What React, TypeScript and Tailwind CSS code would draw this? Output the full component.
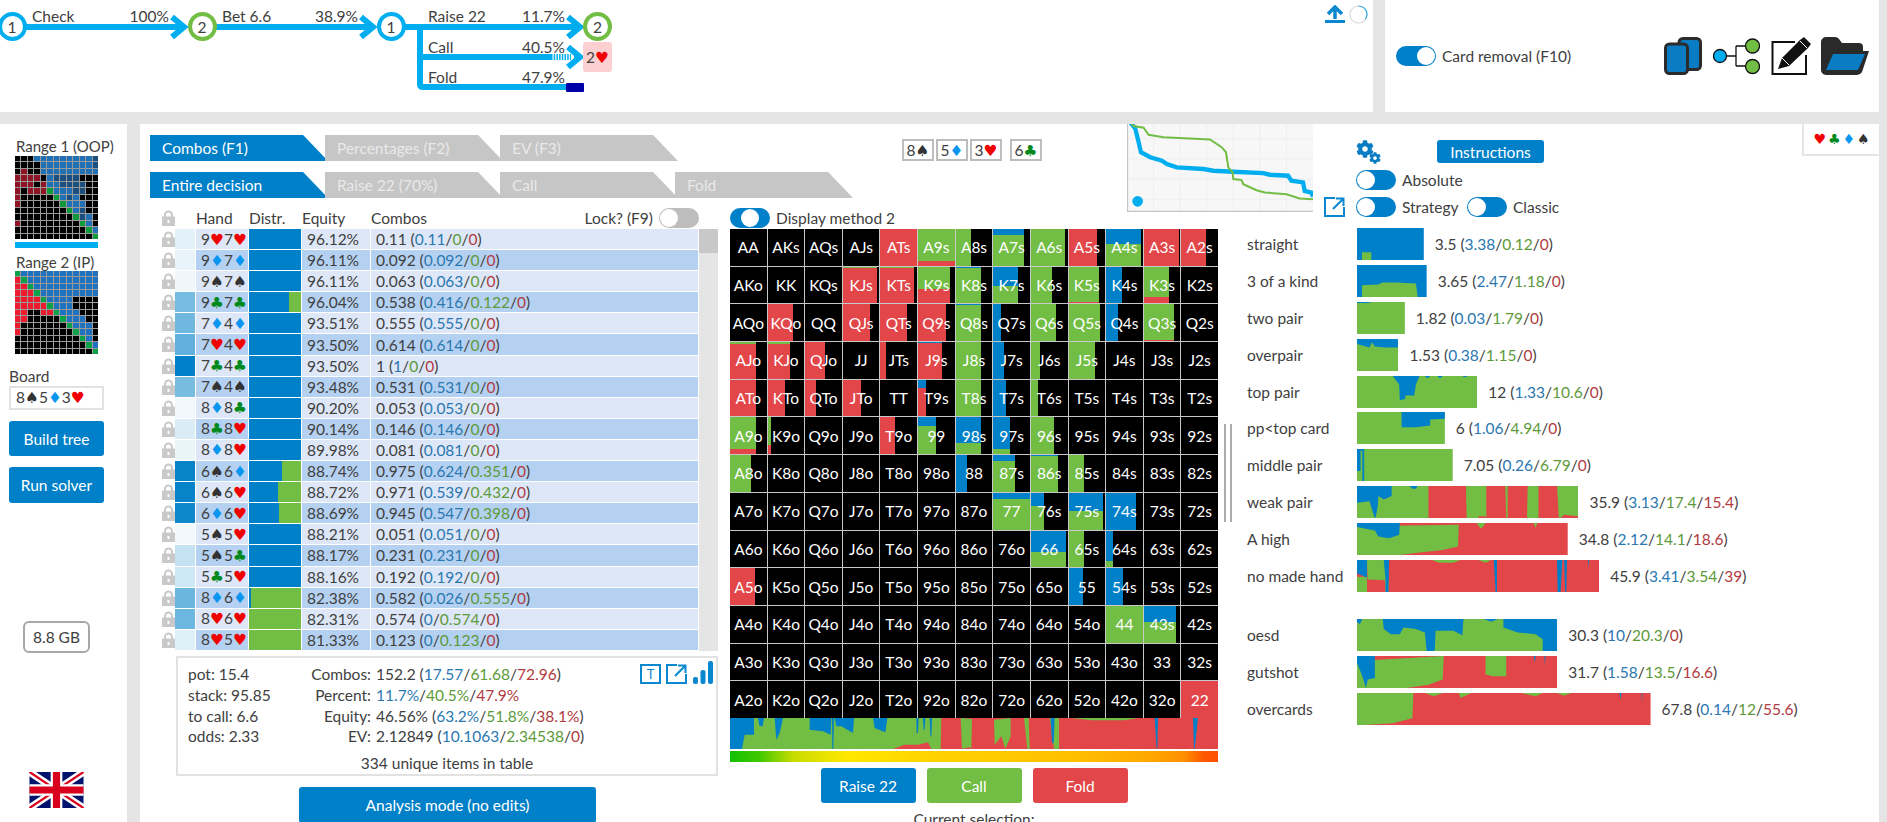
import { FaCog } from 'react-icons/fa';

type Suit = 'h' | 'd' | 's' | 'c';

const suitChar = { h: '♥', d: '♦', s: '♠', c: '♣' };
const suitClass = {
  h: 'text-[#f00000]',
  d: 'text-[#0a96f0]',
  s: 'text-[#333333]',
  c: 'text-[#008a1e]',
};

function Cards({ text }: { text: string }) {
  // text like "9h7h"
  const parts = text.match(/../g) || [];
  return (
    <>
      {parts.map((p, i) => (
        <span key={i}>
          {p[0]}
          <span className={`[font-family:'DejaVu_Sans',sans-serif] ${suitClass[p[1] as Suit]}`}>{suitChar[p[1] as Suit]}</span>
        </span>
      ))}
    </>
  );
}

function Split({ b, g, r }: { b: string; g: string; r: string }) {
  return (
    <>
      <span className="text-[#2b78b0]">{b}</span>/<span className="text-[#5c9a3a]">{g}</span>/<span className="text-[#b23a42]">{r}</span>
    </>
  );
}

function Toggle({ pos, off }: { pos: 'left' | 'mid' | 'right'; off?: boolean }) {
  const justify = pos === 'left' ? 'justify-start' : pos === 'mid' ? 'justify-center' : 'justify-end';
  return (
    <div className={`flex h-5 w-10 shrink-0 items-center rounded-full p-px ${justify} ${off ? 'bg-[#bdbdbd]' : 'bg-[#0080c8]'}`}>
      <div className="h-[18px] w-[18px] rounded-full bg-white" />
    </div>
  );
}

function ExtLink({ className }: { className: string }) {
  return (
    <svg viewBox="0 0 21 20" className={className} fill="none" stroke="#0a88cf" strokeWidth="2">
      <path d="M11 1H1v18h19V10" />
      <path d="M9 12L19 2M12 1.5h7.5V9" />
    </svg>
  );
}

function LockIcon() {
  return (
    <svg viewBox="0 0 13 16" className="h-4 w-[13px]" fill="#c9c9c9">
      <path d="M3 7V5a3.5 3.5 0 0 1 7 0v2" fill="none" stroke="#c9c9c9" strokeWidth="2" />
      <path d="M0 6.5h13V16H0z" />
      <rect x="5.5" y="10" width="2" height="3" fill="#ffffff" />
    </svg>
  );
}

const RANGE1 = [
  'kkkbbbbbbbbbd',
  'kkkkbbbbbbbbd',
  'krkkbbbbbbbbb',
  'rrrrkbddddkkk',
  'rrrkrbbddddkk',
  'rkrrrgbbbddkk',
  'rkkkkkgbdbkkk',
  'rkkkkkkgbbbkk',
  'kkkkkkkkgbdkk',
  'kkkkkkkkkgdbk',
  'rkkkkkkkkkgbk',
  'kkkkkkkkkkkgb',
  'kkkkkkkkkkkkg',
];
const RANGE2 = [
  'gbbbbbbbbbbbb',
  'rgbbbbbbbbbbb',
  'rrgbbbbbbbbbb',
  'rrrgbbbbbbbbb',
  'rrrrgbbbbkkkk',
  'rrrrrgbbbkkkk',
  'rrkkrrgbbbkkk',
  'rrkkkkkgbbbkk',
  'rkkkkkkkgbbbk',
  'rkkkkkkkkgbbk',
  'kkkkkkkkkkgbk',
  'kkkkkkkkkkkgb',
  'kkkkkkkkkkkkg',
];

function RangeGrid({ rows, palette }: { rows: string[]; palette: Record<string, string> }) {
  return (
    <div className="ml-[15px] grid h-[83px] w-[83px] grid-cols-[repeat(13,minmax(0,1fr))] gap-px bg-[#9a9a9a]">
      {rows.join('').split('').map((c, i) => (
        <div key={i} style={{ background: palette[c] }} />
      ))}
    </div>
  );
}

function Flag() {
  return (
    <svg viewBox="0 0 60 40" className="ml-[29px] h-9 w-[55px]">
      <rect width="60" height="40" fill="#00126b" />
      <path d="M0 0L60 40M60 0L0 40" stroke="#ffffff" strokeWidth="8" />
      <path d="M0 0L60 40M60 0L0 40" stroke="#d8001c" strokeWidth="2.5" />
      <path d="M30 0V40M0 20H60" stroke="#ffffff" strokeWidth="13" />
      <path d="M30 0V40M0 20H60" stroke="#d8001c" strokeWidth="8" />
    </svg>
  );
}

function LeftPanel() {
  return (
    <div className="flex w-[127px] shrink-0 flex-col bg-white pt-3 text-[#404040]">
      <div className="ml-4 h-5 whitespace-nowrap text-[15px] leading-5">Range 1 (OOP)</div>
      <RangeGrid rows={RANGE1} palette={{ k: '#000000', b: '#1f70b4', d: '#1a4f80', r: '#8f1425', g: '#0e9a3c' }} />
      <div className="ml-[15px] mt-[3px] h-[6px] w-[83px] bg-[#00aeef]" />
      <div className="ml-4 mt-1 h-5 whitespace-nowrap text-[15px] leading-5">Range 2 (IP)</div>
      <div className="-mt-px">
        <RangeGrid rows={RANGE2} palette={{ k: '#000000', b: '#1f72c0', r: '#ec1c2e', g: '#0da24a' }} />
      </div>
      <div className="ml-[9px] mt-3 h-5 leading-5">Board</div>
      <div className="ml-[9px] flex h-6 w-[95px] items-center border-2 border-[#e2e2e2] pl-[5px] leading-none">
        <Cards text="8s5d3h" />
      </div>
      <button className="ml-[9px] mt-[11px] h-[35px] w-[95px] rounded-[3px] bg-[#0080c8] text-white">Build tree</button>
      <button className="ml-[9px] mt-[11px] h-9 w-[95px] rounded-[3px] bg-[#0080c8] text-white">Run solver</button>
      <div className="ml-[23px] mt-[118px] flex h-8 w-[67px] items-center justify-center rounded-md border-2 border-[#a8a8a8]">8.8 GB</div>
      <div className="mt-[119px]">
        <Flag />
      </div>
    </div>
  );
}

function Label({ x, y, children, right }: { x: number; y: number; children: string; right?: boolean }) {
  // tree labels are placed on the diagram, right-anchored ones use the percent columns
  return (
    <span
      className="absolute -translate-y-1/2 whitespace-nowrap text-[#404040]"
      style={right ? { right: 1373 - x, top: y } : { left: x, top: y }}
    >
      {children}
    </span>
  );
}

function TreePanel() {
  const node = (cx: number, n: string, color: string) => (
    <div
      className="absolute top-[12px] flex h-[29px] w-[29px] items-center justify-center rounded-full border-4 bg-white text-[#404040]"
      style={{ left: cx - 14.5, borderColor: color }}
    >
      {n}
    </div>
  );
  return (
    <div className="relative w-[1373px] shrink-0 overflow-hidden bg-white">
      <svg className="absolute inset-0 h-[112px] w-[1373px]" fill="none" stroke="#00aeef" strokeWidth="6">
        <path d="M20 27H184M172 17l12 10-12 10" />
        <path d="M210 27H373M361 17l12 10-12 10" />
        <path d="M400 27H580M568 17l12 10-12 10" />
        <path d="M420 27V84Q420 87 423 87H566" />
        <path d="M420 57H551" />
        <path d="M551 57H571" strokeDasharray="1.5 1.2" />
        <path d="M568 47l12 10-12 10" />
        <path d="M574 57H580" />
      </svg>
      {node(12, '1', '#00aeef')}
      {node(202, '2', '#72bd44')}
      {node(391, '1', '#00aeef')}
      {node(597.5, '2', '#72bd44')}
      <div className="absolute left-[583px] top-[42px] flex h-[30px] w-[29px] items-center justify-center rounded-[3px] bg-[#fcd0d0] text-[#404040]">
        <Cards text="2h" />
      </div>
      <div className="absolute left-[566px] top-[83px] h-[9px] w-[18px] rounded-[1px] bg-[#0000a8]" />
      <Label x={32} y={16}>Check</Label>
      <Label x={169} y={16} right>100%</Label>
      <Label x={222} y={16}>Bet 6.6</Label>
      <Label x={358} y={16} right>38.9%</Label>
      <Label x={428} y={16}>Raise 22</Label>
      <Label x={565} y={16} right>11.7%</Label>
      <Label x={428} y={47}>Call</Label>
      <Label x={565} y={47} right>40.5%</Label>
      <Label x={428} y={77}>Fold</Label>
      <Label x={565} y={77} right>47.9%</Label>
      <svg viewBox="0 0 20 18" className="absolute left-[1325px] top-[5px] h-[18px] w-5" fill="none" stroke="#0a88cf" strokeWidth="3.5">
        <path d="M10 14V3M3 9l7-7 7 7" />
        <path d="M0 16.5H20" strokeWidth="3" />
      </svg>
      <svg viewBox="0 0 20 20" className="absolute left-[1349px] top-[5px] h-[19px] w-[19px]" fill="none" strokeWidth="1.2">
        <circle cx="10" cy="10" r="9" stroke="#d8d8d8" />
        <path d="M10 1a9 9 0 0 1 9 9 9 9 0 0 1-2 5" stroke="#29abe2" />
      </svg>
    </div>
  );
}

function ToolIcons() {
  return (
    <div className="ml-auto mr-[10px] flex items-center">
      <svg viewBox="0 0 38 38" className="h-[38px] w-[38px]">
        <rect x="15" y="1.5" width="21.5" height="31" rx="4" fill="#0a7cc4" stroke="#2b2b2b" strokeWidth="3" />
        <rect x="1.5" y="7" width="22" height="29.5" rx="4" fill="#0a7cc4" stroke="#2b2b2b" strokeWidth="3" />
      </svg>
      <svg viewBox="0 0 47 38" className="ml-[11px] h-[38px] w-[47px]" stroke="#111111" strokeWidth="1.3">
        <path d="M13 19H23M23 9V29M23 9H33M23 29H33" fill="none" />
        <circle cx="7" cy="19" r="6.5" fill="#00aeef" />
        <circle cx="39.5" cy="9" r="7" fill="#72bd44" />
        <circle cx="39.5" cy="29.5" r="7" fill="#72bd44" />
      </svg>
      <svg viewBox="0 0 40 38" className="ml-[11px] h-[38px] w-10">
        <path d="M24 5H1.5V37H35V18" fill="none" stroke="#111111" strokeWidth="2" />
        <path d="M7 32L11 21L29 3L33 0L40 7L37 11L18 29Z" fill="#111111" />
        <path d="M11 21L18 28M29 4L36 11" stroke="#ffffff" strokeWidth="1" />
      </svg>
      <svg viewBox="0 0 48 38" className="ml-[10px] h-[38px] w-12">
        <path d="M0 5a5 5 0 0 1 5-5h9a5 5 0 0 1 4 2l3 4h17a4 4 0 0 1 4 4v4h6l-7 21a6 6 0 0 1-5 3H5a5 5 0 0 1-5-5z" fill="#2a2a2a" />
        <path d="M12 17H44L37 33H5z" fill="#0a7cc4" />
      </svg>
    </div>
  );
}

function Tab({ label, active, first }: { label: string; active?: boolean; first?: boolean }) {
  return (
    <div
      className={`flex h-[26px] w-[178px] shrink-0 items-center whitespace-nowrap pl-3 [clip-path:polygon(0_0,86%_0,100%_100%,0_100%)] ${
        first ? '' : '-ml-[3px]'
      } ${active ? 'bg-[#0080c8] text-white' : 'bg-[#c6c6c6] text-[#e9e9e9]'}`}
    >
      {label}
    </div>
  );
}

function BoardCard({ text, className }: { text: string; className?: string }) {
  return (
    <div className={`flex h-[22px] w-8 items-center justify-center border-2 border-[#bdbdbd] text-[#404040] ${className || ''}`}>
      <Cards text={text} />
    </div>
  );
}

function EquityChart() {
  return (
    <svg viewBox="80 28 560 280" preserveAspectRatio="none" className="-mt-[6px] h-[94px] w-[186px] shrink-0 bg-[#f7f7f7]" fill="none">
      <path d="M160 28V308M240 28V308M320 28V308M400 28V308M480 28V308M560 28V308M80 90H640M80 150H640M80 210H640M80 270H640" stroke="#eeeeee" strokeWidth="3" />
      <path d="M81 28V307H640" stroke="#c4c4c4" strokeWidth="5" />
      <polyline
        points="85,35 105,60 115,100 122,130 150,145 185,155 200,165 230,175 310,180 340,185 400,188 490,192 510,197 565,200 575,215 610,220 615,245 635,250 640,262"
        stroke="#00aeef"
        strokeWidth="13"
      />
      <polyline
        points="85,35 100,52 130,57 145,78 190,85 330,92 365,115 378,130 385,175 398,190 400,210 425,213 430,225 470,243 495,250 560,255 600,268 640,270"
        stroke="#72bd44"
        strokeWidth="6"
      />
      <circle cx="112" cy="276" r="16" fill="#00aeef" />
    </svg>
  );
}

function SettingsBlock() {
  return (
    <div className="ml-[11px] mt-[16px] flex flex-col text-[#404040]">
      <div className="flex h-6 items-start">
        <div className="relative h-6 w-[25px]">
          <FaCog className="text-[18px] text-[#0a7cc4]" />
          <FaCog className="absolute bottom-0 right-0 text-[12px] text-[#0a7cc4]" />
        </div>
        <button className="ml-[56px] h-[23px] w-[107px] rounded-[3px] bg-[#0080c8] text-white">Instructions</button>
      </div>
      <div className="mt-[6px] flex h-5 items-center">
        <Toggle pos="left" />
        <span className="ml-[6px]">Absolute</span>
      </div>
      <div className="mt-[7px] flex h-5 items-center">
        <Toggle pos="left" />
        <span className="ml-[6px] w-[65px]">Strategy</span>
        <Toggle pos="left" />
        <span className="ml-[6px]">Classic</span>
      </div>
    </div>
  );
}

const ROWS: [string, number, number, string, React.ReactNode][] = [
  ['9h7h', 0.11, 1, '96.12%', <>0.11 (<Split b="0.11" g="0" r="0" />)</>],
  ['9d7d', 0.092, 1, '96.11%', <>0.092 (<Split b="0.092" g="0" r="0" />)</>],
  ['9s7s', 0.063, 1, '96.11%', <>0.063 (<Split b="0.063" g="0" r="0" />)</>],
  ['9c7c', 0.538, 0.77, '96.04%', <>0.538 (<Split b="0.416" g="0.122" r="0" />)</>],
  ['7d4d', 0.555, 1, '93.51%', <>0.555 (<Split b="0.555" g="0" r="0" />)</>],
  ['7h4h', 0.614, 1, '93.50%', <>0.614 (<Split b="0.614" g="0" r="0" />)</>],
  ['7c4c', 1, 1, '93.50%', <>1 (<Split b="1" g="0" r="0" />)</>],
  ['7s4s', 0.531, 1, '93.48%', <>0.531 (<Split b="0.531" g="0" r="0" />)</>],
  ['8d8c', 0.053, 1, '90.20%', <>0.053 (<Split b="0.053" g="0" r="0" />)</>],
  ['8c8h', 0.146, 1, '90.14%', <>0.146 (<Split b="0.146" g="0" r="0" />)</>],
  ['8d8h', 0.081, 1, '89.98%', <>0.081 (<Split b="0.081" g="0" r="0" />)</>],
  ['6s6d', 0.975, 0.64, '88.74%', <>0.975 (<Split b="0.624" g="0.351" r="0" />)</>],
  ['6s6h', 0.971, 0.555, '88.72%', <>0.971 (<Split b="0.539" g="0.432" r="0" />)</>],
  ['6d6h', 0.945, 0.58, '88.69%', <>0.945 (<Split b="0.547" g="0.398" r="0" />)</>],
  ['5s5h', 0.051, 1, '88.21%', <>0.051 (<Split b="0.051" g="0" r="0" />)</>],
  ['5s5c', 0.231, 1, '88.17%', <>0.231 (<Split b="0.231" g="0" r="0" />)</>],
  ['5c5h', 0.192, 1, '88.16%', <>0.192 (<Split b="0.192" g="0" r="0" />)</>],
  ['8d6d', 0.582, 0.045, '82.38%', <>0.582 (<Split b="0.026" g="0.555" r="0" />)</>],
  ['8h6h', 0.574, 0, '82.31%', <>0.574 (<Split b="0" g="0.574" r="0" />)</>],
  ['8h5h', 0.123, 0, '81.33%', <>0.123 (<Split b="0" g="0.123" r="0" />)</>],
];

function HandTable() {
  return (
    <div className="flex">
      <div className="ml-3 w-[537px]">
        {ROWS.map(([hand, freq, blue, eq, combos], i) => {
          const shade = i % 2 === 0 ? 'bg-[#dde7f7]' : 'bg-[#b5d1f1]';
          return (
            <div key={hand} className="flex h-[21.1px] border-b border-white">
              <div className="w-[13px] shrink-0 pt-[2px]">
                <LockIcon />
              </div>
              <div className="mr-px w-5 shrink-0" style={{ background: `rgba(0,128,200,${freq})` }} />
              <div className={`mr-px flex w-[52px] shrink-0 items-center pl-[5px] ${shade}`}>
                <Cards text={hand} />
              </div>
              <div className="mr-px flex w-[52px] shrink-0 bg-[#72bd44]">
                <div className="bg-[#0080c8]" style={{ width: `${blue * 100}%` }} />
              </div>
              <div className={`mr-px flex w-[68px] shrink-0 items-center pl-[5px] ${shade}`}>{eq}</div>
              <div className={`flex flex-1 items-center pl-[5px] ${shade}`}>{combos}</div>
            </div>
          );
        })}
      </div>
      <div className="ml-px h-[422px] w-[19px] bg-[#e5e5e5]">
        <div className="h-6 bg-[#c8c8c8]" />
      </div>
    </div>
  );
}

function InfoBox() {
  const labels = [
    ['pot: 15.4', 'Combos:', <>152.2 (<Split b="17.57" g="61.68" r="72.96" />)</>],
    ['stack: 95.85', 'Percent:', <Split b="11.7%" g="40.5%" r="47.9%" />],
    ['to call: 6.6', 'Equity:', <>46.56% (<Split b="63.2%" g="51.8%" r="38.1%" />)</>],
    ['odds: 2.33', 'EV:', <>2.12849 (<Split b="10.1063" g="2.34538" r="0" />)</>],
  ] as const;
  return (
    <div className="ml-[26px] mt-[5px] h-[120px] w-[542px] border-2 border-[#e2e2e2] pl-[10px] pt-[6px]">
      <div className="flex">
        <div className="w-[462px] shrink-0">
          {labels.map(([left, label, value]) => (
            <div key={label} className="flex h-[20.7px] items-center whitespace-nowrap">
              <span className="w-[110px]">{left}</span>
              <span className="w-[73px] text-right">{label}</span>
              <span className="ml-[5px]">{value}</span>
            </div>
          ))}
        </div>
        <div className="-ml-[10px] flex items-start">
          <div className="flex h-5 w-[21px] items-center justify-center border-2 border-[#0a88cf] text-[13px] leading-none text-[#0a88cf]">T</div>
          <ExtLink className="ml-[5px] h-5 w-[21px]" />
          <svg viewBox="0 0 20 23" className="-mt-[3px] ml-[6px] h-[23px] w-5" fill="#0a88cf">
            <rect x="0" y="16" width="5" height="7" rx="2" />
            <rect x="7.5" y="9" width="5" height="14" rx="2" />
            <rect x="15" y="0" width="5" height="23" rx="2" />
          </svg>
        </div>
      </div>
      <div className="-ml-[10px] mt-[6px] text-center">334 unique items in table</div>
    </div>
  );
}

const RANKS = 'AKQJT98765432'.split('');

// [width, blue, green, red] as fractions of the cell
const HEAT: Record<string, [number, number, number, number]> = {
  ATs: [1, 0, 0, 1], A9s: [1, 0, 0.87, 0.13], A8s: [0.43, 0, 1, 0], A7s: [0.85, 0.15, 0.85, 0], A6s: [0.93, 0, 1, 0], A5s: [0.78, 0, 0, 1], A4s: [0.95, 0.42, 0.58, 0], A3s: [0.97, 0, 0, 1], A2s: [0.68, 0, 0, 1],
  KJs: [0.93, 0, 0.04, 0.96], KTs: [0.92, 0, 0.03, 0.97], K9s: [0.88, 0, 0.6, 0.4], K8s: [0.7, 0.03, 0.97, 0], K7s: [0.68, 0.52, 0.48, 0], K6s: [0.58, 0, 1, 0], K5s: [0.83, 0, 0.97, 0.03], K4s: [0.43, 1, 0, 0], K3s: [0.7, 0, 0.82, 0.18],
  KQo: [0.7, 0, 0, 1], QJs: [0.73, 0, 0, 1], QTs: [0.72, 0, 0, 1], Q9s: [0.75, 0, 0, 1], Q8s: [0.7, 0.02, 0.98, 0], Q7s: [0.22, 1, 0, 0], Q6s: [0.68, 0, 1, 0], Q5s: [0.85, 0, 1, 0], Q4s: [0.32, 1, 0, 0], Q3s: [0.83, 0, 0.97, 0.03],
  AJo: [0.72, 0, 0.05, 0.95], KJo: [0.6, 0, 0.05, 0.95], QJo: [0.55, 0, 0, 1], JTs: [0.16, 0, 0, 1], J9s: [0.66, 0.03, 0, 0.97], J8s: [0.7, 0, 1, 0], J7s: [0.28, 1, 0, 0], J6s: [0.24, 0, 1, 0], J5s: [0.72, 0, 1, 0],
  ATo: [0.72, 0, 0, 1], KTo: [0.47, 0, 0.02, 0.98], QTo: [0.3, 0, 0, 1], JTo: [0.5, 0, 0, 1], T9s: [0.23, 0.22, 0, 0.78], T8s: [0.7, 0, 1, 0], T7s: [0.36, 1, 0, 0], T6s: [0.18, 0, 1, 0],
  A9o: [0.72, 0, 0.87, 0.13], K9o: [0.1, 0, 0.75, 0.25], T9o: [0.4, 0, 0, 1], '99': [0.5, 0.22, 0.78, 0], '98s': [0.7, 0.7, 0.3, 0], '97s': [0.45, 0.85, 0.15, 0], '96s': [0.63, 0, 1, 0],
  A8o: [0.58, 0, 1, 0], '88': [0.3, 1, 0, 0], '87s': [0.6, 0.15, 0.85, 0], '86s': [0.75, 0.02, 0.98, 0], '85s': [0.42, 0, 1, 0],
  '77': [1, 0.18, 0.82, 0], '76s': [0.37, 0.37, 0.63, 0], '75s': [0.95, 0.5, 0.5, 0], '74s': [0.82, 1, 0, 0],
  '66': [0.95, 0.58, 0.42, 0], '65s': [0.42, 0, 1, 0], '64s': [0.2, 0.83, 0.17, 0],
  A5o: [0.68, 0, 0, 1], '55': [0.4, 1, 0, 0], '54s': [0.45, 1, 0, 0],
  '44': [1, 0, 1, 0], '43s': [0.87, 0.43, 0.57, 0],
  '22': [1, 0, 0, 1],
};

function HeatCell({ name }: { name: string }) {
  const h = HEAT[name];
  return (
    <div className="relative bg-black">
      {h && (
        <div className="flex h-full flex-col" style={{ width: `${h[0] * 100}%` }}>
          <div className="bg-[#0080c8]" style={{ height: `${h[1] * 100}%` }} />
          <div className="bg-[#72bd44]" style={{ height: `${h[2] * 100}%` }} />
          <div className="bg-[#e24649]" style={{ height: `${h[3] * 100}%` }} />
        </div>
      )}
      <div className="absolute inset-0 flex items-center justify-center text-white">{name}</div>
    </div>
  );
}

function StrategyStrip() {
  return (
    <svg viewBox="16 775 1464 93" preserveAspectRatio="none" className="block h-[31px] w-[488px]">
      <rect x="16" y="775" width="1464" height="93" fill="#e24649" />
      <g fill="#72bd44">
        <polygon points="16,775 650,775 648,868 620,868 610,848 580,855 540,855 505,868 16,868" />
        <polygon points="708,775 742,778 740,868 735,862 712,868" />
        <polygon points="808,780 858,775 858,830 842,868 830,830 810,855" />
        <polygon points="898,775 912,775 915,868 908,868" />
        <polygon points="975,775 1003,775 1003,868 988,868" />
        <polygon points="1040,775 1240,775 1200,782 1100,782" />
      </g>
      <g fill="#0080c8">
        <polygon points="16,775 88,775 88,825 60,825 52,868 16,868" />
        <polygon points="100,775 118,775 114,800 104,798" />
        <polygon points="150,775 175,775 165,820 155,840" />
        <polygon points="255,775 320,775 318,825 295,815 255,810" />
        <polygon points="322,775 328,775 326,868 323,868" />
        <polygon points="330,775 388,775 385,820 350,800 335,800" />
        <polygon points="445,775 488,775 482,818 450,805" />
        <polygon points="575,775 582,775 580,820 576,820" />
        <polygon points="595,775 602,775 600,810 597,810" />
        <polygon points="615,775 622,775 620,830 617,830" />
        <polygon points="978,775 990,775 987,850 982,850" />
        <polygon points="1290,775 1300,775 1298,868 1296,868" />
        <polygon points="1405,775 1420,775 1410,868 1408,868" />
      </g>
    </svg>
  );
}

function Heatmap() {
  return (
    <div className="ml-3 w-[488px] shrink-0">
      <div className="grid h-[489px] w-[488px] grid-cols-[repeat(13,minmax(0,1fr))] grid-rows-[repeat(13,minmax(0,1fr))] gap-px bg-[#c8c8c8]">
        {RANKS.map((r1, i) =>
          RANKS.map((r2, j) => {
            const name = i === j ? r1 + r2 : i < j ? r1 + r2 + 's' : r2 + r1 + 'o';
            return <HeatCell key={name} name={name} />;
          })
        )}
      </div>
      <StrategyStrip />
      <div className="mt-[2px] h-[11px] bg-[linear-gradient(90deg,#12c000_0%,#40c800_6%,#c8dc00_13%,#ffe800_24%,#ffd400_40%,#ffc000_70%,#ffa800_86%,#ff9000_93%,#ff5800_97%,#ff5000_100%)]" />
      <div className="mt-[6px] flex justify-center gap-[11px] text-white">
        <button className="h-[35px] w-[95px] rounded-[3px] bg-[#0080c8]">Raise 22</button>
        <button className="h-[35px] w-[95px] rounded-[3px] bg-[#72bd44]">Call</button>
        <button className="h-[35px] w-[95px] rounded-[3px] bg-[#e24649]">Fold</button>
      </div>
      <div className="mt-[6px] text-center text-[#404040]">Current selection:</div>
    </div>
  );
}

type Bar = {
  name: string;
  w: number;
  bg: string;
  green?: string[];
  blue?: string[];
  red?: string[];
  total: string;
  b: string;
  g: string;
  r: string;
  gap?: boolean;
};

const BLUE = '#0080c8';
const GREEN = '#72bd44';
const RED = '#e24649';

const BARS: Bar[] = [
  { name: 'straight', w: 187, bg: BLUE, green: ['14,72 40,72 40,95 14,95'], total: '3.5', b: '3.38', g: '0.12', r: '0' },
  { name: '3 of a kind', w: 195, bg: BLUE, green: ['14,60 60,58 70,52 110,52 165,55 170,95 14,95'], total: '3.65', b: '2.47', g: '1.18', r: '0' },
  { name: 'two pair', w: 134, bg: GREEN, blue: ['0,0 42,0 30,3 0,3'], total: '1.82', b: '0.03', g: '1.79', r: '0' },
  { name: 'overpair', w: 116, bg: GREEN, blue: ['0,0 116,0 116,25 80,25 50,22 42,10 35,25 0,15'], total: '1.53', b: '0.38', g: '1.15', r: '0' },
  { name: 'top pair', w: 337, bg: GREEN, blue: ['100,0 175,0 165,25 160,58 135,58 135,68 120,72 118,25', '190,0 205,0 200,5 195,5', '225,0 240,0 235,5 230,5', '295,0 310,0 305,3 300,3'], total: '12', b: '1.33', g: '10.6', r: '0' },
  { name: 'pp<top card', w: 246, bg: GREEN, blue: ['125,0 246,0 246,20 205,22 205,40 165,45 125,45'], total: '6', b: '1.06', g: '4.94', r: '0' },
  { name: 'middle pair', w: 268, bg: GREEN, blue: ['0,0 20,0 20,95 15,95 15,5 10,5 10,65 0,65'], total: '7.05', b: '0.26', g: '6.79', r: '0' },
  { name: 'weak pair', w: 620, bg: GREEN, red: ['200,0 305,0 307,95 200,95', '362,0 415,0 418,95 362,95', '422,0 478,0 476,95 422,95', '508,0 560,0 565,95 508,95', '340,90 360,90 360,95 340,95', '580,85 620,90 620,95 570,95'], blue: ['0,0 97,0 97,30 75,40 60,30 58,60 52,95 48,90 35,45 0,50', '148,0 170,0 165,8 155,8'], total: '35.9', b: '3.13', g: '17.4', r: '15.4' },
  { name: 'A high', w: 590, bg: RED, green: ['0,10 285,5 283,70 240,80 170,88 120,95 0,95', '335,0 360,0 350,15 345,15', '495,0 505,0 500,15'], blue: ['0,0 120,0 118,35 90,45 60,40 50,22 0,12'], total: '34.8', b: '2.12', g: '14.1', r: '18.6' },
  { name: 'no made hand', w: 678, bg: RED, green: ['28,0 88,0 88,95 80,95 78,60 30,58', '0,50 28,50 28,95 0,95', '210,0 290,0 270,8 230,8', '340,0 375,0 360,8'], blue: ['0,0 28,0 28,52 0,40', '75,0 90,0 88,95 80,95 80,60', '383,0 392,0 392,95 388,95', '560,0 575,0 570,95 562,95', '580,0 588,0 586,95 583,95', '647,0 650,0 649,25'], total: '45.9', b: '3.41', g: '3.54', r: '39' },
  { gap: true, name: 'oesd', w: 561, bg: GREEN, blue: ['0,0 15,0 8,15 0,10', '72,0 298,0 295,48 270,35 220,35 218,90 215,95 195,95 190,40 165,30 130,25 120,45 95,45 75,30', '355,0 395,0 375,8', '410,0 561,0 561,95 520,95 520,60 500,45 450,40 410,25'], total: '30.3', b: '10', g: '20.3', r: '0' },
  { name: 'gutshot', w: 561, bg: RED, green: ['0,15 243,0 240,70 200,85 140,95 70,95 0,95', '360,0 418,0 418,60 380,60 360,55'], blue: ['0,0 50,0 50,65 30,70 25,95 15,60 0,20', '495,0 500,0 498,20', '525,0 528,0 526,30'], total: '31.7', b: '1.58', g: '13.5', r: '16.6' },
  { name: 'overcards', w: 822, bg: RED, green: ['0,0 158,0 155,75 100,90 20,95 0,95', '190,0 240,0 215,10', '285,0 320,0 290,15', '460,0 520,0 500,10', '560,0 600,0 580,8'], blue: ['735,0 740,0 738,20', '797,0 799,0 798,30'], total: '67.8', b: '0.14', g: '12', r: '55.6' },
];

function CategoryList() {
  return (
    <div className="-mt-px ml-[15px] flex w-[520px] flex-col text-[#404040]">
      {BARS.map((bar) => (
        <div key={bar.name} className={`mb-[4.9px] flex h-[32px] items-center whitespace-nowrap ${bar.gap ? 'mt-[22px]' : ''}`}>
          <span className="w-[110px] shrink-0">{bar.name}</span>
          <svg
            viewBox={`0 0 ${bar.w} 95`}
            preserveAspectRatio="none"
            className="h-[32px] shrink-0"
            style={{ width: bar.w / 2.8 }}
          >
            <rect width={bar.w} height="95" fill={bar.bg} />
            {bar.green?.map((p, i) => <polygon key={i} points={p} fill={GREEN} />)}
            {bar.red?.map((p, i) => <polygon key={i} points={p} fill={RED} />)}
            {bar.blue?.map((p, i) => <polygon key={i} points={p} fill={BLUE} />)}
          </svg>
          <span className="ml-[11px]">
            {bar.total} (<Split b={bar.b} g={bar.g} r={bar.r} />)
          </span>
        </div>
      ))}
    </div>
  );
}

export default function App() {
  return (
    <div className="h-[822px] w-[1887px] overflow-hidden bg-[#e5e5e5] text-[15.5px] leading-5 text-[#404040] [font-family:Lato,'Liberation_Sans',sans-serif]">
      {/* top bars */}
      <div className="flex h-[112px]">
        <TreePanel />
        <div className="ml-3 flex w-[494px] shrink-0 items-center bg-white pl-[11px]">
          <Toggle pos="right" />
          <span className="ml-[6px]">Card removal (F10)</span>
          <ToolIcons />
        </div>
      </div>

      <div className="mt-3 flex h-[698px]">
        <LeftPanel />

        <div className="relative ml-[13px] w-[1739px] shrink-0 overflow-hidden bg-white pl-[10px]">
          {/* suit legend */}
          <div className="absolute right-0 top-0 flex h-[32px] w-[77px] items-center justify-center gap-[2px] border-b-2 border-l-2 border-[#e5e5e5] text-[14px] [font-family:'DejaVu_Sans',sans-serif]">
            <span className="text-[#f00000]">♥</span>
            <span className="text-[#008a1e]">♣</span>
            <span className="text-[#0a96f0]">♦</span>
            <span className="text-[#333333]">♠</span>
          </div>

          {/* header area */}
          <div className="flex h-[105px]">
            <div className="w-[977px] shrink-0 pt-[11px]">
              <div className="flex h-[26px]">
                <Tab label="Combos (F1)" active first />
                <Tab label="Percentages (F2)" />
                <Tab label="EV (F3)" />
                <div className="ml-[224px] mt-1 flex">
                  <BoardCard text="8s" />
                  <BoardCard text="5d" className="ml-[2px]" />
                  <BoardCard text="3h" className="ml-[2px]" />
                  <BoardCard text="6c" className="ml-2" />
                </div>
              </div>
              <div className="mt-[11px] flex h-[26px]">
                <Tab label="Entire decision" active first />
                <Tab label="Raise 22 (70%)" />
                <Tab label="Call" />
                <Tab label="Fold" />
              </div>
              <div className="mt-[10px] flex h-5">
                <div className="flex w-[549px] shrink-0 items-center">
                  <div className="ml-3 w-[34px] shrink-0">
                    <LockIcon />
                  </div>
                  <span className="w-[53px]">Hand</span>
                  <span className="w-[53px]">Distr.</span>
                  <span className="w-[69px]">Equity</span>
                  <span>Combos</span>
                  <span className="ml-auto mr-[6px]">Lock? (F9)</span>
                  <Toggle pos="left" off />
                </div>
                <div className="ml-[31px] flex items-center">
                  <Toggle pos="mid" />
                  <span className="ml-[6px] whitespace-nowrap">Display method 2</span>
                </div>
              </div>
            </div>
            <EquityChart />
            <div className="ml-[11px] mt-[73px] shrink-0">
              <ExtLink className="h-5 w-[21px]" />
            </div>
            <SettingsBlock />
          </div>

          {/* table, matrix, hand categories */}
          <div className="flex">
            <div className="w-[568px] shrink-0">
              <HandTable />
              <InfoBox />
              <button className="ml-[149px] mt-[11px] h-9 w-[297px] rounded-[3px] bg-[#0080c8] text-white">Analysis mode (no edits)</button>
            </div>
            <Heatmap />
            <div className="ml-[6px] mt-[195px] flex h-[98px] gap-1">
              <div className="w-[2px] bg-[#ababab]" />
              <div className="w-[2px] bg-[#ababab]" />
            </div>
            <CategoryList />
          </div>
        </div>
      </div>
    </div>
  );
}
